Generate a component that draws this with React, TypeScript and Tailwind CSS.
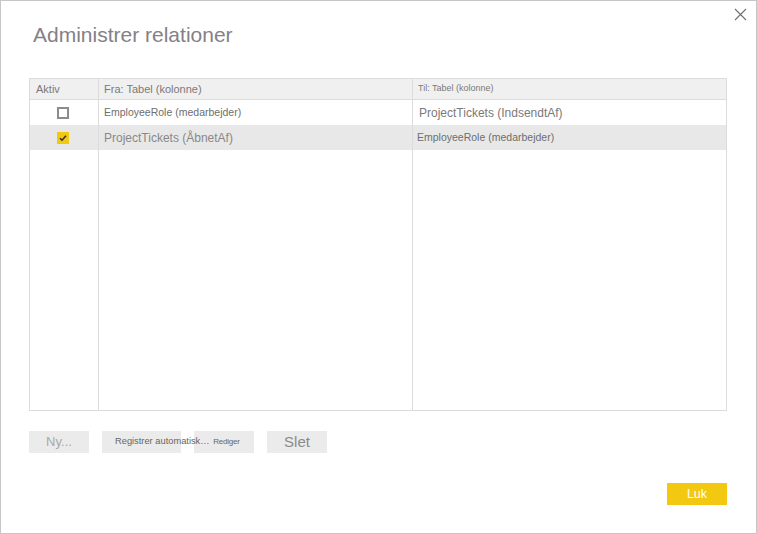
import React from "react";

const rows = [
  {
    active: false,
    from: "EmployeeRole (medarbejder)",
    to: "ProjectTickets (IndsendtAf)",
    fromCls: "text-[10.5px] text-[#6e6e6e]",
    toCls: "text-[12px] text-[#7a7a7a] pl-[6px]",
    bg: "bg-white",
  },
  {
    active: true,
    from: "ProjectTickets (ÅbnetAf)",
    to: "EmployeeRole (medarbejder)",
    fromCls: "text-[12px] text-[#888]",
    toCls: "text-[10.5px] text-[#6e6e6e] pl-[4px]",
    bg: "bg-[#e8e8e8]",
  },
];

const Checkbox = ({ checked }: { checked: boolean }) =>
  checked ? (
    <div className="w-[12px] h-[12px] bg-[#f2c811] flex items-center justify-center">
      <svg width="10" height="10" viewBox="0 0 10 10">
        <path d="M2 5.2 L4 7.2 L8 2.8" fill="none" stroke="#333" strokeWidth="1.6" />
      </svg>
    </div>
  ) : (
    <div className="w-[12px] h-[12px] border-2 border-[#8c8c8c] bg-white" />
  );

export default function App() {
  return (
    <div className="w-[757px] h-[534px] border border-[#c6c6c6] bg-white relative flex flex-col font-['Liberation_Sans',Arial,sans-serif]">
      <button className="absolute top-[7px] right-[9px] w-[13px] h-[13px] flex items-center justify-center">
        <svg width="13" height="13" viewBox="0 0 13 13">
          <path d="M1 1 L12 12 M12 1 L1 12" stroke="#6e6e6e" strokeWidth="1.1" />
        </svg>
      </button>

      <h1 className="ml-[32px] mt-[23px] text-[21px] leading-[21px] text-[#857f88]">
        Administrer relationer
      </h1>

      <div className="ml-[28px] mt-[33px] w-[698px] h-[333px] border border-[#dcdcdc] grid grid-cols-[69px_314px_1fr] grid-rows-[21px_25px_25px_1fr]">
        <div className="bg-[#f0f0f0] border-r border-b border-[#dcdcdc] flex items-center pl-[6px] text-[11px] text-[#7a7a7a]">
          Aktiv
        </div>
        <div className="bg-[#f0f0f0] border-r border-b border-[#dcdcdc] flex items-center pl-[5px] text-[11px] text-[#7a7a7a]">
          Fra: Tabel (kolonne)
        </div>
        <div className="bg-[#f0f0f0] border-b border-[#dcdcdc] flex items-center pl-[5px] text-[9px] text-[#7a7a7a]">
          Til: Tabel (kolonne)
        </div>

        {rows.map((r, i) => (
          <React.Fragment key={i}>
            <div className={`${r.bg} border-r border-[#dcdcdc] flex items-center justify-center pr-[3px]`}>
              <Checkbox checked={r.active} />
            </div>
            <div className={`${r.bg} border-r border-[#dcdcdc] flex items-center pl-[5px] whitespace-nowrap ${r.fromCls}`}>
              {r.from}
            </div>
            <div className={`${r.bg} flex items-center whitespace-nowrap ${r.toCls}`}>
              {r.to}
            </div>
          </React.Fragment>
        ))}

        <div className="border-r border-[#dcdcdc]" />
        <div className="border-r border-[#dcdcdc]" />
        <div />
      </div>

      <div className="ml-[28px] mt-[20px] flex gap-[13px]">
        <button className="w-[60px] h-[22px] bg-[#ebebeb] text-[13px] text-[#a8a8a8] flex items-center justify-center">
          Ny...
        </button>
        <button className="w-[79px] h-[22px] bg-[#ebebeb] text-[9.3px] text-[#666] flex items-center pl-[13px] whitespace-nowrap">
          <span className="relative z-10">Registrer automatisk…</span>
        </button>
        <button className="w-[60px] h-[22px] bg-[#ebebeb] text-[8px] tracking-[-0.2px] text-[#666] flex items-start justify-center pt-[5px] pl-[5px]">
          Rediger
        </button>
        <button className="w-[60px] h-[22px] bg-[#ebebeb] text-[15px] text-[#8a8a8a] flex items-center justify-center pt-[1px]">
          Slet
        </button>
      </div>

      <button className="self-end mr-[29px] mt-[30px] w-[60px] h-[22px] bg-[#f2c811] text-white text-[12.5px] flex items-center justify-center">
        Luk
      </button>
    </div>
  );
}
